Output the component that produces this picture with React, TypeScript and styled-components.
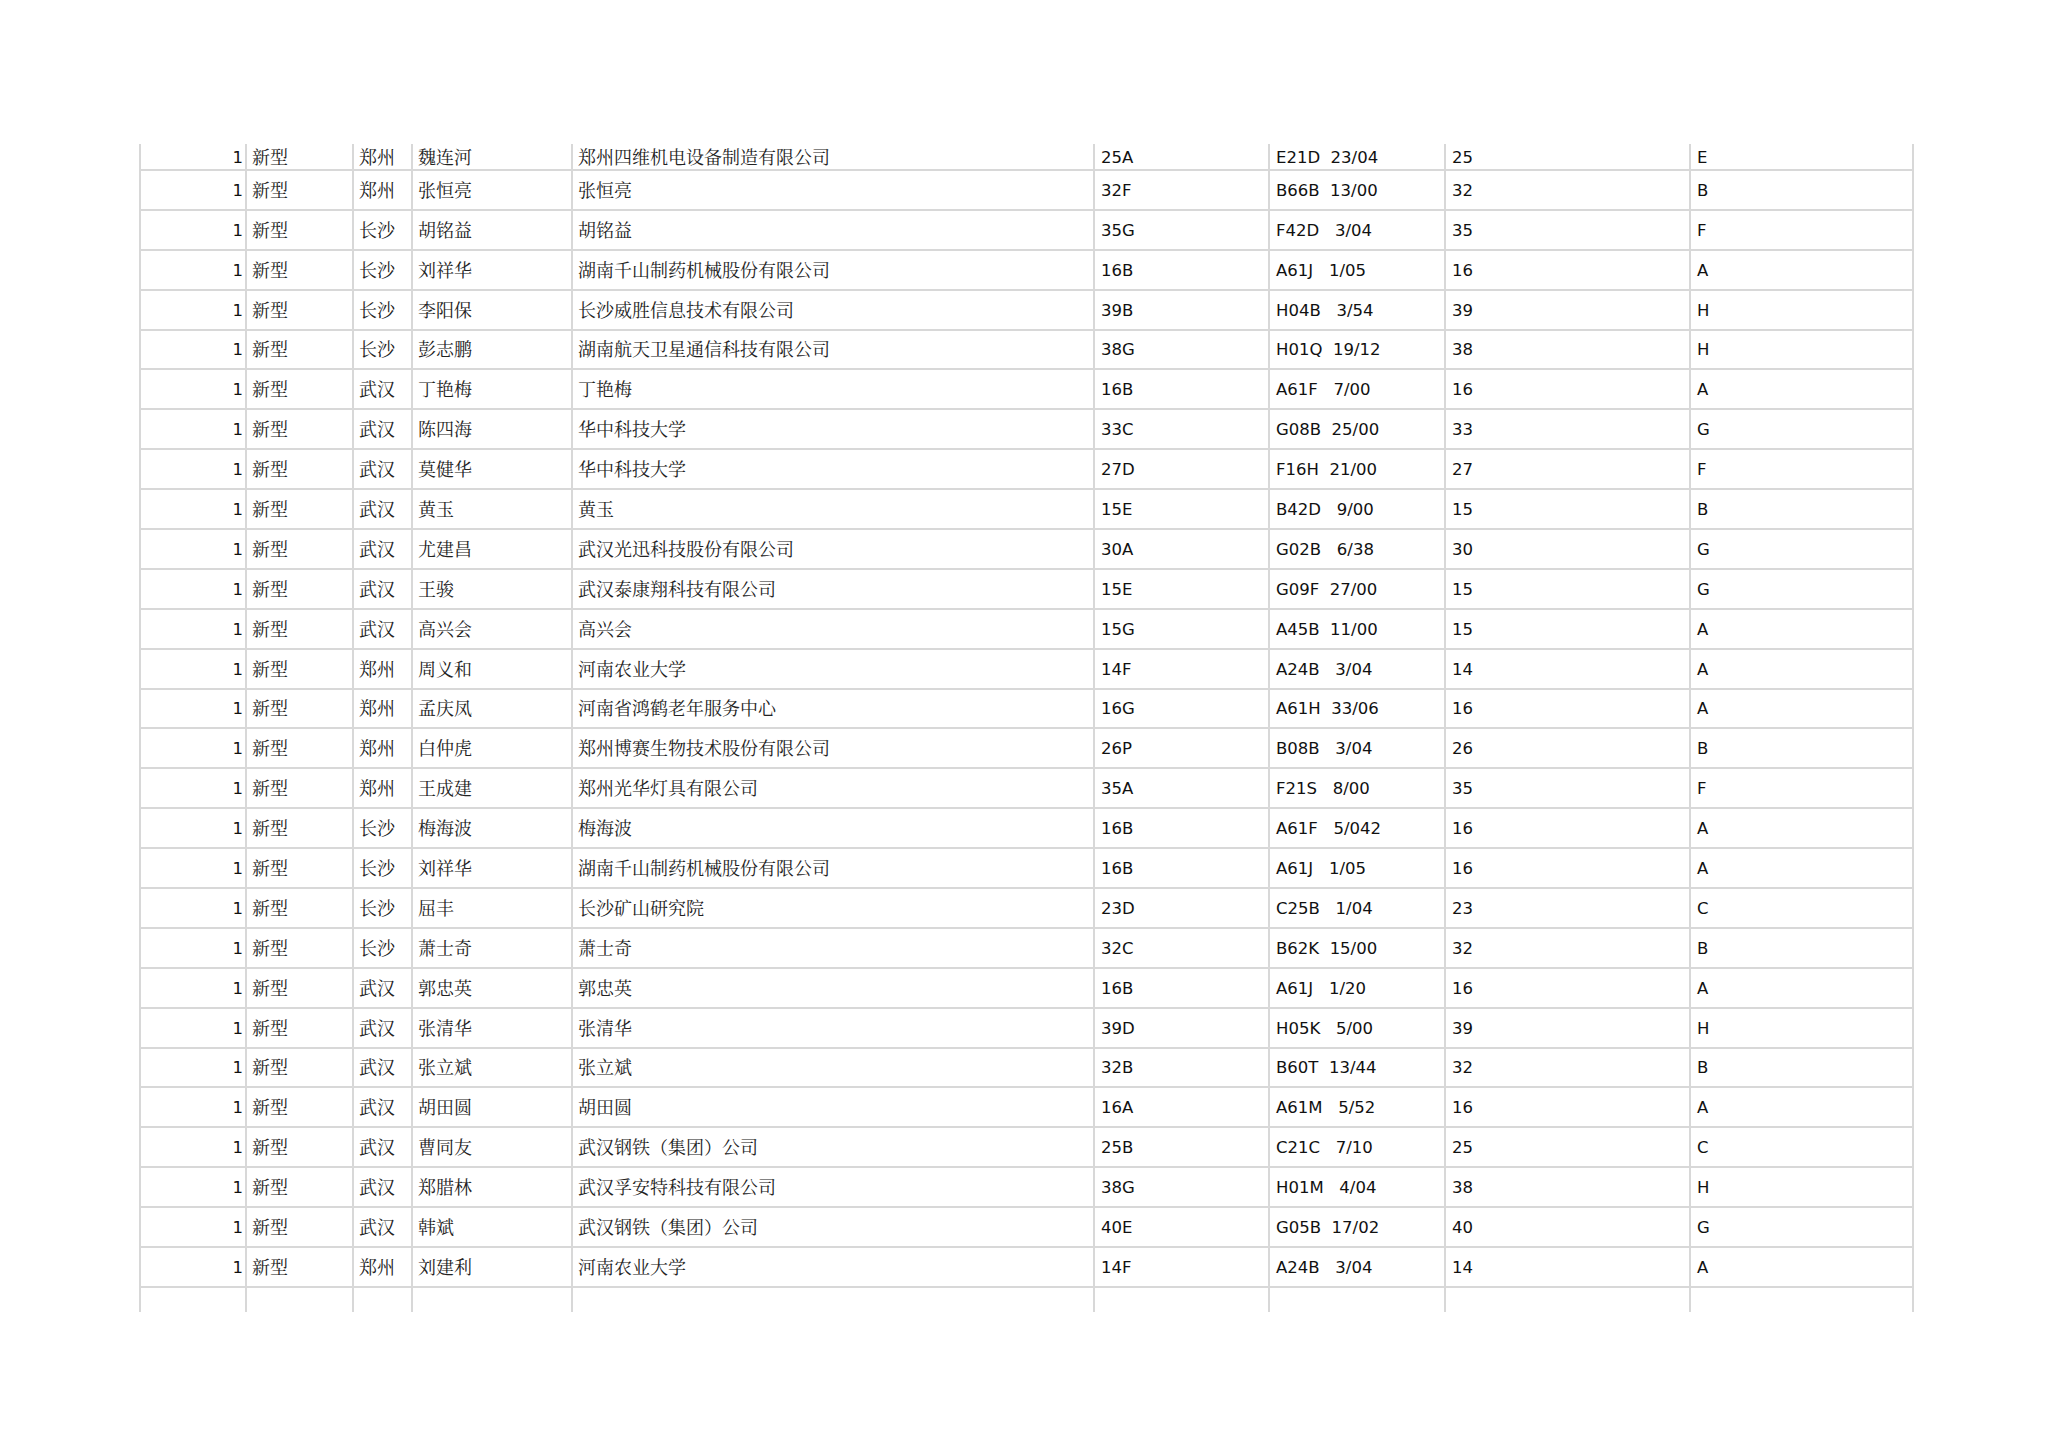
import React from "react";
import styled, { createGlobalStyle, css } from "styled-components";

type Entry = {
  kind: string;
  city: string;
  person: string;
  org: string;
  cls: string;
  ipc: string;
  major: string;
  letter: string;
};

const rows: Entry[] = [
  { kind: "新型", city: "郑州", person: "魏连河", org: "郑州四维机电设备制造有限公司", cls: "25A", ipc: "E21D  23/04", major: "25", letter: "E" },
  { kind: "新型", city: "郑州", person: "张恒亮", org: "张恒亮", cls: "32F", ipc: "B66B  13/00", major: "32", letter: "B" },
  { kind: "新型", city: "长沙", person: "胡铭益", org: "胡铭益", cls: "35G", ipc: "F42D   3/04", major: "35", letter: "F" },
  { kind: "新型", city: "长沙", person: "刘祥华", org: "湖南千山制药机械股份有限公司", cls: "16B", ipc: "A61J   1/05", major: "16", letter: "A" },
  { kind: "新型", city: "长沙", person: "李阳保", org: "长沙威胜信息技术有限公司", cls: "39B", ipc: "H04B   3/54", major: "39", letter: "H" },
  { kind: "新型", city: "长沙", person: "彭志鹏", org: "湖南航天卫星通信科技有限公司", cls: "38G", ipc: "H01Q  19/12", major: "38", letter: "H" },
  { kind: "新型", city: "武汉", person: "丁艳梅", org: "丁艳梅", cls: "16B", ipc: "A61F   7/00", major: "16", letter: "A" },
  { kind: "新型", city: "武汉", person: "陈四海", org: "华中科技大学", cls: "33C", ipc: "G08B  25/00", major: "33", letter: "G" },
  { kind: "新型", city: "武汉", person: "莫健华", org: "华中科技大学", cls: "27D", ipc: "F16H  21/00", major: "27", letter: "F" },
  { kind: "新型", city: "武汉", person: "黄玉", org: "黄玉", cls: "15E", ipc: "B42D   9/00", major: "15", letter: "B" },
  { kind: "新型", city: "武汉", person: "尤建昌", org: "武汉光迅科技股份有限公司", cls: "30A", ipc: "G02B   6/38", major: "30", letter: "G" },
  { kind: "新型", city: "武汉", person: "王骏", org: "武汉泰康翔科技有限公司", cls: "15E", ipc: "G09F  27/00", major: "15", letter: "G" },
  { kind: "新型", city: "武汉", person: "高兴会", org: "高兴会", cls: "15G", ipc: "A45B  11/00", major: "15", letter: "A" },
  { kind: "新型", city: "郑州", person: "周义和", org: "河南农业大学", cls: "14F", ipc: "A24B   3/04", major: "14", letter: "A" },
  { kind: "新型", city: "郑州", person: "孟庆凤", org: "河南省鸿鹤老年服务中心", cls: "16G", ipc: "A61H  33/06", major: "16", letter: "A" },
  { kind: "新型", city: "郑州", person: "白仲虎", org: "郑州博赛生物技术股份有限公司", cls: "26P", ipc: "B08B   3/04", major: "26", letter: "B" },
  { kind: "新型", city: "郑州", person: "王成建", org: "郑州光华灯具有限公司", cls: "35A", ipc: "F21S   8/00", major: "35", letter: "F" },
  { kind: "新型", city: "长沙", person: "梅海波", org: "梅海波", cls: "16B", ipc: "A61F   5/042", major: "16", letter: "A" },
  { kind: "新型", city: "长沙", person: "刘祥华", org: "湖南千山制药机械股份有限公司", cls: "16B", ipc: "A61J   1/05", major: "16", letter: "A" },
  { kind: "新型", city: "长沙", person: "屈丰", org: "长沙矿山研究院", cls: "23D", ipc: "C25B   1/04", major: "23", letter: "C" },
  { kind: "新型", city: "长沙", person: "萧士奇", org: "萧士奇", cls: "32C", ipc: "B62K  15/00", major: "32", letter: "B" },
  { kind: "新型", city: "武汉", person: "郭忠英", org: "郭忠英", cls: "16B", ipc: "A61J   1/20", major: "16", letter: "A" },
  { kind: "新型", city: "武汉", person: "张清华", org: "张清华", cls: "39D", ipc: "H05K   5/00", major: "39", letter: "H" },
  { kind: "新型", city: "武汉", person: "张立斌", org: "张立斌", cls: "32B", ipc: "B60T  13/44", major: "32", letter: "B" },
  { kind: "新型", city: "武汉", person: "胡田圆", org: "胡田圆", cls: "16A", ipc: "A61M   5/52", major: "16", letter: "A" },
  { kind: "新型", city: "武汉", person: "曹同友", org: "武汉钢铁（集团）公司", cls: "25B", ipc: "C21C   7/10", major: "25", letter: "C" },
  { kind: "新型", city: "武汉", person: "郑腊林", org: "武汉孚安特科技有限公司", cls: "38G", ipc: "H01M   4/04", major: "38", letter: "H" },
  { kind: "新型", city: "武汉", person: "韩斌", org: "武汉钢铁（集团）公司", cls: "40E", ipc: "G05B  17/02", major: "40", letter: "G" },
  { kind: "新型", city: "郑州", person: "刘建利", org: "河南农业大学", cls: "14F", ipc: "A24B   3/04", major: "14", letter: "A" },
];

const App: React.FC = () => {
  return (
    <Page>
      <GlobalStyle />
      <Sheet>
        {rows.map((r, i) => (
          <Row key={i} $variant={i === 0 ? "cut" : "full"}>
            <Cell $align="right">1</Cell>
            <Cell $cjk>{r.kind}</Cell>
            <Cell $cjk>{r.city}</Cell>
            <Cell $cjk>{r.person}</Cell>
            <Cell $cjk>{r.org}</Cell>
            <Cell>{r.cls}</Cell>
            <Cell>{r.ipc}</Cell>
            <Cell>{r.major}</Cell>
            <Cell>{r.letter}</Cell>
          </Row>
        ))}
        <Row $variant="tail">
          {Array.from({ length: 9 }).map((_, i) => (
            <Cell key={i} />
          ))}
        </Row>
      </Sheet>
    </Page>
  );
};

export default App;

// Styled Components
const GlobalStyle = createGlobalStyle`
  html, body {
    margin: 0;
    padding: 0;
    background: #ffffff;
  }
`;

const Page = styled.div`
  width: 2048px;
  height: 1447px;
  overflow: hidden;
  background: #ffffff;
  padding: 144px 0 0 139px;
  box-sizing: border-box;
`;

const Sheet = styled.div`
  display: flex;
  flex-direction: column;
  width: 1775px;
`;

type Variant = "cut" | "full" | "tail";

const rowHeights: Record<Variant, string> = {
  cut: "27px",
  full: "39.9px",
  tail: "24px",
};

const Cell = styled.div<{ $align?: "left" | "right"; $cjk?: boolean }>`
  box-sizing: border-box;
  display: flex;
  align-items: flex-end;
  justify-content: ${(p) => (p.$align === "right" ? "flex-end" : "flex-start")};
  padding: 0 ${(p) => (p.$align === "right" ? "2px" : "0")} 0
    ${(p) => (p.$cjk ? "5px" : "6px")};
  border-right: 2px solid #d8d8d8;
  border-bottom: 2px solid #d8d8d8;
  white-space: pre;
  overflow: hidden;
  line-height: 20px;
  color: ${(p) => (p.$cjk ? "#222222" : "#111111")};
  font-family: "DejaVu Sans", "Noto Serif CJK SC", "Noto Sans CJK SC", sans-serif;
  font-size: ${(p) => (p.$cjk ? "18px" : "16.5px")};
`;

const Row = styled.div<{ $variant: Variant }>`
  display: grid;
  grid-template-columns: 106px 107px 59px 160px 522px 175px 176px 245px 223px;
  height: ${(p) => rowHeights[p.$variant]};
  border-left: 2px solid #d8d8d8;

  ${Cell} {
    padding-bottom: ${(p) => (p.$variant === "cut" ? "1px" : "8px")};
  }

  ${(p) =>
    p.$variant === "tail" &&
    css`
      ${Cell} {
        border-bottom: none;
      }
    `}
`;
